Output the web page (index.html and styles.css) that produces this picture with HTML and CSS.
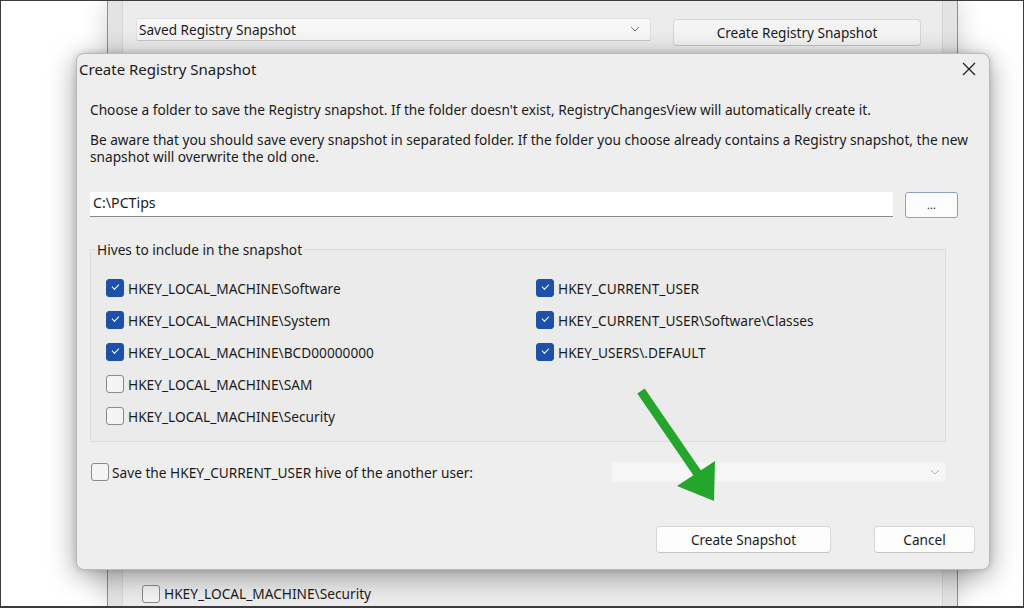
FILE: index.html
```html
<!DOCTYPE html>
<html>
<head>
<meta charset="utf-8">
<title>Create Registry Snapshot</title>
<link rel="stylesheet" href="styles.css">
</head>
<body>
<div class="screen">
  <div class="parent-win">
    <div class="parent-inner">
      <div class="toolbar">
        <div class="combo combo-main">
          <span>Saved Registry Snapshot</span>
          <svg class="chev" width="10" height="6" viewBox="0 0 10 6"><polyline points="1,1 5,5 9,1" fill="none" stroke="#777" stroke-width="1"/></svg>
        </div>
        <button class="btn btn-top">Create Registry Snapshot</button>
      </div>
      <label class="check-row parent-row"><span class="cb"></span><span>HKEY_LOCAL_MACHINE\Security</span></label>
    </div>
  </div>

  <div class="dialog">
    <div class="titlebar">
      <span class="title">Create Registry Snapshot</span>
      <svg class="close" width="14" height="14" viewBox="0 0 14 14"><path d="M1 1 L13 13 M13 1 L1 13" stroke="#222" stroke-width="1.3" fill="none"/></svg>
    </div>
    <div class="dlg-body">
      <p class="p1">Choose a folder to save the Registry snapshot. If the folder doesn't exist, RegistryChangesView will automatically create it.</p>
      <p class="p2">Be aware that you should save every snapshot in separated folder. If the folder you choose already contains a Registry snapshot, the new snapshot will overwrite the old one.</p>
      <div class="path-row">
        <div class="path-input">C:\PCTips</div>
        <button class="btn btn-browse">...</button>
      </div>
      <fieldset class="hives">
        <legend>Hives to include in the snapshot</legend>
        <div class="hive-grid">
          <div class="hive-col">
            <label class="check-row"><span class="cb on"></span><span>HKEY_LOCAL_MACHINE\Software</span></label>
            <label class="check-row"><span class="cb on"></span><span>HKEY_LOCAL_MACHINE\System</span></label>
            <label class="check-row"><span class="cb on"></span><span>HKEY_LOCAL_MACHINE\BCD00000000</span></label>
            <label class="check-row"><span class="cb"></span><span>HKEY_LOCAL_MACHINE\SAM</span></label>
            <label class="check-row"><span class="cb"></span><span>HKEY_LOCAL_MACHINE\Security</span></label>
          </div>
          <div class="hive-col">
            <label class="check-row"><span class="cb on"></span><span>HKEY_CURRENT_USER</span></label>
            <label class="check-row"><span class="cb on"></span><span>HKEY_CURRENT_USER\Software\Classes</span></label>
            <label class="check-row"><span class="cb on"></span><span>HKEY_USERS\.DEFAULT</span></label>
          </div>
        </div>
      </fieldset>
      <div class="other-row">
        <label class="check-row other-check"><span class="cb"></span><span>Save the HKEY_CURRENT_USER hive of the another user:</span></label>
        <div class="combo combo-user">
          <svg class="chev" width="10" height="6" viewBox="0 0 10 6"><polyline points="1,1 5,5 9,1" fill="none" stroke="#b5b5b5" stroke-width="1"/></svg>
        </div>
      </div>
      <div class="btn-row">
        <button class="btn btn-create">Create Snapshot</button>
        <button class="btn btn-cancel">Cancel</button>
      </div>
    </div>
  </div>

  <svg class="arrow" width="100" height="130" viewBox="630 380 100 130">
    <line x1="641" y1="391" x2="700" y2="477" stroke="#24a62c" stroke-width="9"/>
    <polygon points="677,486 715,461 714,501" fill="#24a62c"/>
  </svg>
</div>
</body>
</html>
```

FILE: styles.css
```css
* { box-sizing: border-box; }

html, body {
  margin: 0;
  padding: 0;
  overflow: hidden;
}

body {
  width: 1024px;
  height: 608px;
  font-family: "Noto Sans", "Open Sans", sans-serif;
  font-size: 13.7px;
  color: #1b1b1b;
}

.screen {
  position: relative;
  width: 1024px;
  height: 608px;
  background: #ffffff;
  border-top: 1px solid #3c3c3c;
  border-left: 1px solid #3c3c3c;
  border-right: 1px solid #3c3c3c;
  border-bottom: 2px solid #3c3c3c;
  display: flex;
  padding-left: 106px;
  overflow: hidden;
}

/* background parent window */
.parent-win {
  width: 851px;
  height: 100%;
  background: #e3e3e3;
  border-left: 1px solid #8e8e8e;
  border-right: 1px solid #8e8e8e;
  padding: 0 14px;
  box-shadow: 0 0 24px rgba(0, 0, 0, 0.18);
}

.parent-inner {
  height: 100%;
  background: #ececec;
  border-left: 1px solid #d6d6d6;
  border-right: 1px solid #d6d6d6;
  display: flex;
  flex-direction: column;
  padding: 17px 0 3px 13px;
}

.toolbar {
  display: flex;
  align-items: flex-start;
  gap: 22px;
}

.combo {
  display: flex;
  align-items: center;
  justify-content: space-between;
  background: #f7f7f7;
  border: 1px solid #e0e0e0;
  border-bottom-color: #c9c9c9;
  border-radius: 2px;
}

.combo-main {
  width: 515px;
  height: 23px;
  padding: 0 10px 1px 2px;
  font-size: 13.6px;
}

.chev { display: block; }

.btn {
  font-family: inherit;
  color: #1b1b1b;
  background: #fbfbfb;
  border: 1px solid #d6d6d6;
  border-bottom-color: #c4c4c4;
  border-radius: 4px;
  padding: 0;
  margin: 0;
}

.btn-top {
  width: 248px;
  height: 27px;
  margin-top: 1px;
  font-size: 13.6px;
  background: #f4f4f4;
}

.parent-row {
  margin-top: auto;
  margin-left: 6px;
}

/* dialog */
.dialog {
  position: absolute;
  left: 75px;
  top: 52px;
  width: 914px;
  height: 517px;
  background: #eeeeee;
  border: 1px solid #b9b9b9;
  border-radius: 8px;
  box-shadow: 0 6px 28px rgba(0, 0, 0, 0.38), 0 0 6px rgba(0, 0, 0, 0.15);
  display: flex;
  flex-direction: column;
}

.titlebar {
  height: 34px;
  display: flex;
  align-items: center;
  justify-content: space-between;
  padding: 0 13px 4px 2px;
}

.title {
  font-size: 15px;
}

.close { display: block; }

.dlg-body {
  padding: 13px 14px 0 13px;
  display: flex;
  flex-direction: column;
}

.dlg-body p {
  margin: 0;
  line-height: 17px;
}

.dlg-body .p2 { margin-top: 13px; }

.path-row {
  display: flex;
  gap: 12px;
  margin-top: 27px;
  margin-right: 17px;
  align-items: flex-start;
}

.path-input {
  flex: 1;
  height: 25px;
  background: #ffffff;
  border-bottom: 1px solid #8a8a8a;
  padding: 1px 6px 0 3px;
  font-size: 14.2px;
}

.btn-browse {
  width: 53px;
  height: 26px;
  border: 1px solid #8aa0bd;
  border-radius: 3px;
  background: #fcfcfc;
  font-size: 11px;
  line-height: 20px;
}

.hives {
  margin: 23px 29px 0 0;
  padding: 14px 10px 9px 15px;
  border: 1px solid #dcdcdc;
  border-radius: 2px;
  background: #ebebeb;
}

.hives legend {
  margin-left: -11px;
  padding: 0 2px;
  line-height: 17px;
}

.hive-grid {
  display: grid;
  grid-template-columns: 430px 1fr;
}

.hive-col {
  display: flex;
  flex-direction: column;
}

.hive-col .check-row { height: 32px; }

.check-row {
  display: flex;
  align-items: center;
  gap: 4px;
}

.cb {
  position: relative;
  width: 18px;
  height: 18px;
  border: 1px solid #8a8a8a;
  border-radius: 3px;
  background: #f4f4f4;
  flex: none;
}

.cb.on {
  background: #1d50a8;
  border-color: #1d50a8;
}

.cb.on::after {
  content: "";
  position: absolute;
  left: 5px;
  top: 4px;
  width: 6px;
  height: 3px;
  border-left: 1.3px solid #ffffff;
  border-bottom: 1.3px solid #ffffff;
  transform: rotate(-45deg);
}

.other-row {
  display: flex;
  align-items: center;
  height: 24px;
  margin-top: 18px;
  margin-right: 29px;
  padding-left: 1px;
}

.other-check { gap: 3px; }

.combo-user {
  margin-left: auto;
  width: 335px;
  height: 20px;
  background: #f6f6f6;
  border-color: #f0f0f0;
  justify-content: flex-end;
  padding-right: 5px;
}

.btn-row {
  display: flex;
  justify-content: flex-end;
  gap: 43px;
  margin-top: 42px;
}

.btn-create, .btn-cancel {
  height: 27px;
  font-size: 13.6px;
  background: #fdfdfd;
}

.btn-create { width: 175px; }
.btn-cancel { width: 101px; }

/* annotation arrow overlay */
.arrow {
  position: absolute;
  left: 629px;
  top: 379px;
  pointer-events: none;
}
```
